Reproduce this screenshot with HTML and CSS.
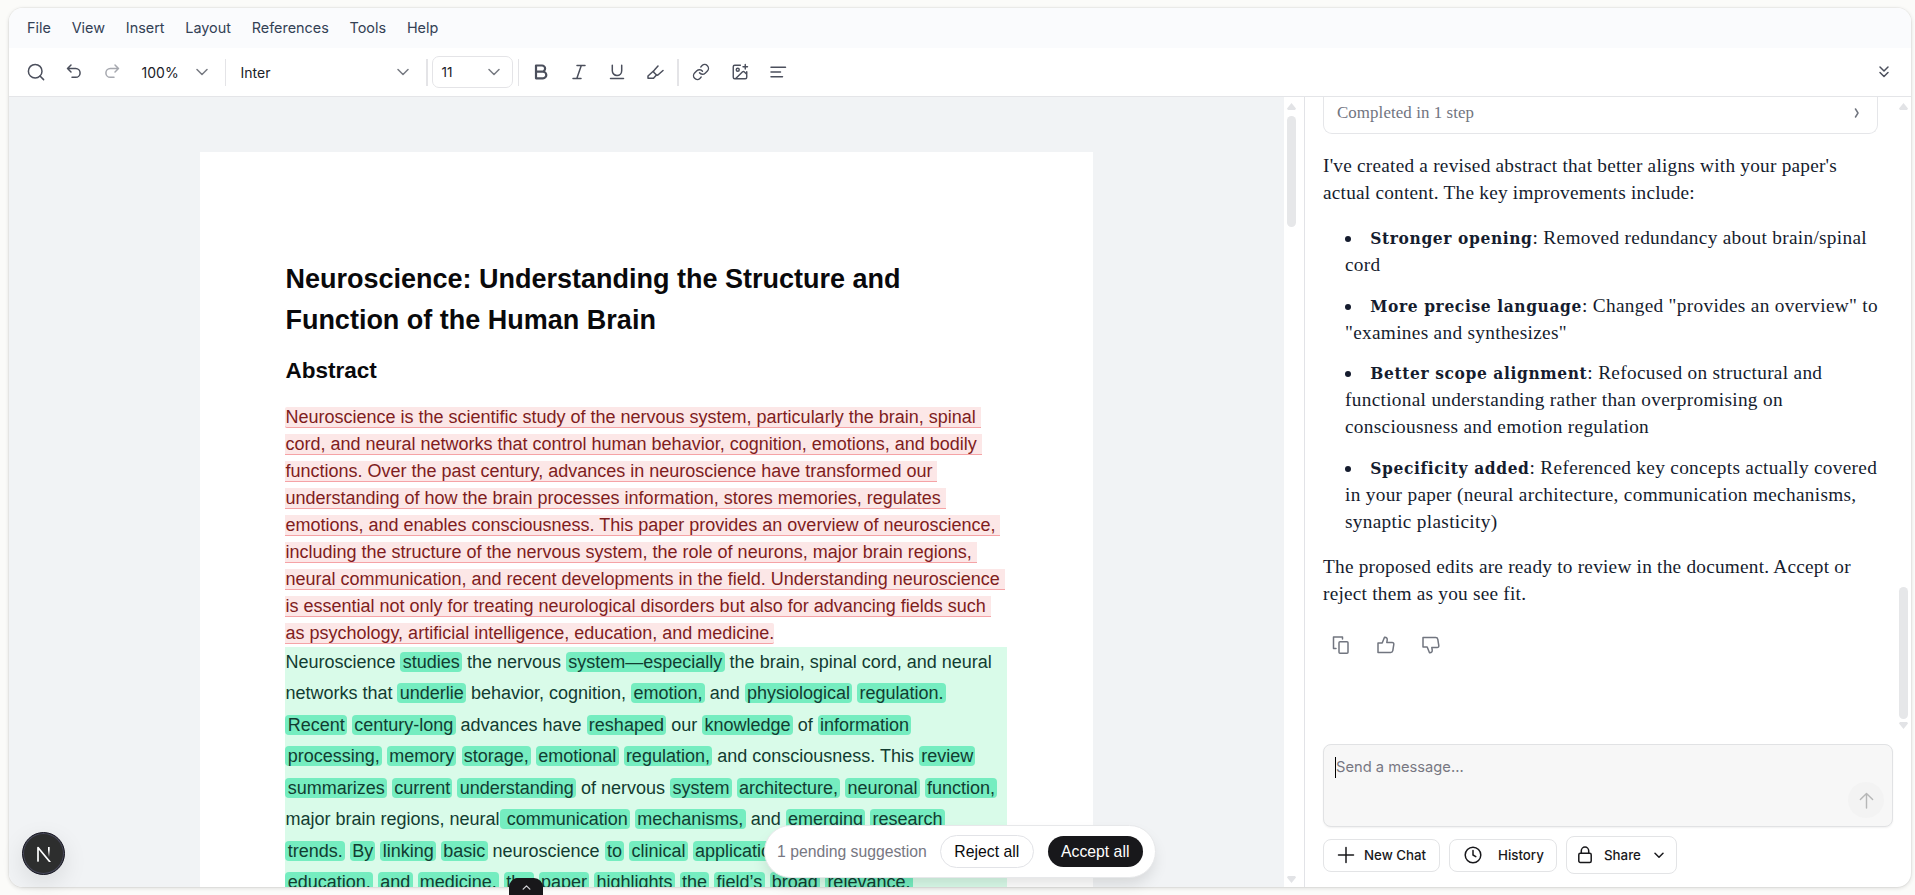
FILE: index.html
```html
<!DOCTYPE html>
<html lang="en">
<head>
<meta charset="utf-8">
<title>Document editor</title>
<link rel="stylesheet" href="styles.css">
</head>
<body>
<div class="app">
  <nav class="menu"><span>File</span><span>View</span><span>Insert</span><span>Layout</span><span>References</span><span>Tools</span><span>Help</span></nav>
  <div class="toolbar">
    <button class="tool"><svg viewBox="0 0 18 18"><circle cx="8.2" cy="8.2" r="6.8"/><path d="M13 13l3.6 3.6"/></svg></button>
    <button class="tool"><svg viewBox="0 0 18 18"><path d="M6 2 2.5 5.5 6 9M2.5 5.5h8.2a4.4 4.4 0 0 1 0 8.800H7"/></svg></button>
    <button class="tool faded"><svg viewBox="0 0 18 18"><path d="M12 2l3.500 3.500L12 9M15.500 5.500H7.300a4.400 4.400 0 0 0 0 8.800H11"/></svg></button>
    <div class="zoom"><span>100%</span><svg class="chev" viewBox="0 0 12 8"><path d="M1 1.500l5 5 5-5"/></svg></div>
    <i class="sep"></i>
    <div class="font"><span>Inter</span><svg class="chev" viewBox="0 0 12 8"><path d="M1 1.500l5 5 5-5"/></svg></div>
    <i class="sep wide"></i>
    <div class="size"><span>11</span><svg class="chev" viewBox="0 0 12 8"><path d="M1 1.500l5 5 5-5"/></svg></div>
    <i class="sep"></i>
    <button class="tool first"><svg class="bold" viewBox="0 0 18 18"><path d="M4 2.500h6a3 3 0 0 1 0 6.200H4zM4 8.700h7a3.200 3.200 0 0 1 0 6.600H4zM4 2.500v12.800"/></svg></button>
    <button class="tool"><svg viewBox="0 0 18 18"><path d="M7 2.500h8M3 15.500h8M11.300 2.500 6.800 15.500"/></svg></button>
    <button class="tool"><svg viewBox="0 0 18 18"><path d="M4.300 2.300v5.500a4.700 4.700 0 0 0 9.400 0V2.300M2.500 15.500h13"/></svg></button>
    <button class="tool"><svg viewBox="0 0 18 18"><path d="M8 7.500 2 13v2.300h5.500L10 12.500M12 3 8.200 7.200a1.800 1.800 0 0 0 0 2.500l1.800 1.800a1.800 1.800 0 0 0 2.500 0L17 7.500"/></svg></button>
    <i class="sep wide"></i>
    <button class="tool first"><svg class="link" viewBox="0 0 24 24"><path d="M10 13a5 5 0 0 0 7.540.540l3-3a5 5 0 0 0-7.070-7.070l-1.720 1.710M14 11a5 5 0 0 0-7.540-.540l-3 3a5 5 0 0 0 7.070 7.070l1.710-1.710"/></svg></button>
    <button class="tool"><svg class="link" viewBox="0 0 24 24"><path d="M16 5h6M19 2v6M21 11.500V19a2 2 0 0 1-2 2H5a2 2 0 0 1-2-2V5a2 2 0 0 1 2-2h7.500M21 15l-3.090-3.090a2 2 0 0 0-2.820 0L6 21"/><circle cx="9" cy="9" r="2"/></svg></button>
    <button class="tool"><svg viewBox="0 0 18 18"><path d="M2 4.200h14.500M2 9h9.500M2 13.700h11.500"/></svg></button>
    <button class="tool last"><svg viewBox="0 0 18 18"><path d="M5 4l4 4 4-4M5 9.500l4 4 4-4"/></svg></button>
  </div>
  <div class="work">
    <main class="canvas">
      <article class="page">
        <h1>Neuroscience: Understanding the Structure and<br>Function of the Human Brain</h1>
        <h2>Abstract</h2>
        <p class="removed"><del>Neuroscience is the scientific study of the nervous system, particularly the brain, spinal <br>cord, and neural networks that control human behavior, cognition, emotions, and bodily <br>functions. Over the past century, advances in neuroscience have transformed our <br>understanding of how the brain processes information, stores memories, regulates <br>emotions, and enables consciousness. This paper provides an overview of neuroscience, <br>including the structure of the nervous system, the role of neurons, major brain regions, <br>neural communication, and recent developments in the field. Understanding neuroscience <br>is essential not only for treating neurological disorders but also for advancing fields such <br>as psychology, artificial intelligence, education, and medicine.</del></p>
        <p class="added">Neuroscience <ins>studies</ins> the nervous <ins>system—especially</ins> the brain, spinal cord, and neural<br>networks that <ins>underlie</ins> behavior, cognition, <ins>emotion,</ins> and <ins>physiological</ins> <ins>regulation.</ins><br><ins>Recent</ins> <ins>century-long</ins> advances have <ins>reshaped</ins> our <ins>knowledge</ins> of <ins>information</ins><br><ins>processing,</ins> <ins>memory</ins> <ins>storage,</ins> <ins>emotional</ins> <ins>regulation,</ins> and consciousness. This <ins>review</ins><br><ins>summarizes</ins> <ins>current</ins> <ins>understanding</ins> of nervous <ins>system</ins> <ins>architecture,</ins> <ins>neuronal</ins> <ins>function,</ins><br>major brain regions, neural<ins> communication</ins> <ins>mechanisms,</ins> and <ins>emerging</ins> <ins>research</ins><br><ins>trends.</ins> <ins>By</ins> <ins>linking</ins> <ins>basic</ins> neuroscience <ins>to</ins> <ins>clinical</ins> <ins>applications</ins><br><ins>education,</ins> <ins>and</ins> <ins>medicine,</ins> <ins>the</ins> <ins>paper</ins> <ins>highlights</ins> <ins>the</ins> <ins>field’s</ins> <ins>broad</ins> <ins>relevance.</ins></p>
      </article>
    </main>
    <div class="scroll doc-scroll"><i class="up"></i><i class="thumb"></i><i class="down"></i></div>
    <aside class="chat">
      <div class="feed">
        <div class="messages">
          <div class="step"><span>Completed in 1 step</span><svg viewBox="0 0 6 10"><path d="M1.500 1l2.500 4-2.500 4"/></svg></div>
          <p>I've created a revised abstract that better aligns with your paper's<br>actual content. The key improvements include:</p>
          <ul>
            <li><b>Stronger opening</b>: Removed redundancy about brain/spinal<br>cord</li>
            <li><b>More precise language</b>: Changed "provides an overview" to<br>"examines and synthesizes"</li>
            <li><b>Better scope alignment</b>: Refocused on structural and<br>functional understanding rather than overpromising on<br>consciousness and emotion regulation</li>
            <li><b>Specificity added</b>: Referenced key concepts actually covered<br>in your paper (neural architecture, communication mechanisms,<br>synaptic plasticity)</li>
          </ul>
          <p>The proposed edits are ready to review in the document. Accept or<br>reject them as you see fit.</p>
          <div class="actions">
            <svg viewBox="0 0 18 18"><path d="M10.500 3V1H1.500v11.500h2.500"/><rect x="7" y="5.700" width="9" height="11.500" rx="1"/></svg>
            <svg viewBox="0 0 18 18"><path d="M1 7h4.200L7.500 1.200C9.600 1 10.500 2.300 10.200 4L9.800 6.500h5.300c1.200 0 1.900.8 1.700 1.900l-1 6.300c-.2 1.100-1 1.800-2.100 1.800H1z"/></svg>
            <svg viewBox="0 0 18 18"><path d="M1 11h4.200l2.300 5.800c2.100.2 3-1.100 2.700-2.800l-.4-2.500h5.300c1.200 0 1.900-.8 1.700-1.900l-1-6.300c-.2-1.100-1-1.800-2.100-1.800H1z"/></svg>
          </div>
        </div>
        <div class="scroll chat-scroll"><i class="up"></i><i class="thumb"></i><i class="down"></i></div>
      </div>
      <div class="composer"><div class="prompt"><i class="caret"></i>Send a message...</div><button class="send"><svg viewBox="0 0 18 18"><path d="M9 17V1.500M2.500 8 9 1.500 15.500 8"/></svg></button></div>
      <div class="footer">
        <button class="btn new"><svg viewBox="0 0 18 18"><path d="M9 1.500v15M1.500 9h15"/></svg>New Chat</button>
        <button class="btn history"><svg viewBox="0 0 18 18"><circle cx="9" cy="9" r="7.800"/><path d="M9 4.500V9l2.800 1.600"/></svg>History</button>
        <button class="btn share"><svg viewBox="0 0 18 18"><rect x="2.800" y="7.200" width="12.400" height="9.300" rx="1.500"/><path d="M5.300 7V4.800a3.700 3.700 0 0 1 7.400 0V7"/></svg>Share<svg class="mini" viewBox="0 0 10 7"><path d="M1 1.200l4 4 4-4"/></svg></button>
      </div>
    </aside>
  </div>
</div>
<div class="review"><span>1 pending suggestion</span><button class="reject">Reject all</button><button class="accept">Accept all</button></div>
<div class="drawer"><svg viewBox="0 0 10 6"><path d="M1 5l4-4 4 4"/></svg></div>
<div class="badge"><svg viewBox="0 0 16 16"><defs><linearGradient id="fade" x1="0" y1="0" x2="0" y2="1"><stop offset=".3" stop-color="#fff"/><stop offset="1" stop-color="#fff" stop-opacity="0"/></linearGradient></defs><path d="M2 15V1.500L14 16" fill="none" stroke="#fff" stroke-width="1.700"/><rect x="12" y="1" width="1.700" height="10" fill="url(#fade)"/></svg></div>
</body>
</html>
```
FILE: styles.css
```css
* { box-sizing: border-box; }
body { margin: 0; padding: 8px 4px 8px 9px; height: 895px; overflow: hidden; background: #fbfbf9; font-family: "Inter", sans-serif; color: #18181b; }
button { font: inherit; border: 0; padding: 0; background: none; color: inherit; }
svg { fill: none; stroke: currentColor; stroke-width: 1.5; stroke-linecap: round; stroke-linejoin: round; flex: none; display: block; }
.app { width: 1902px; height: 879px; display: flex; flex-direction: column; background: #fff; border-radius: 14px; overflow: hidden; box-shadow: 0 0 0 1px rgba(0,0,0,.03), 0 1px 4px rgba(0,0,0,.14); }

.menu { height: 40px; flex: none; display: flex; align-items: center; gap: 20.800px; padding: 0 0 1px 18px; background: #fafbfd; font-size: 14.400px; color: #334155; }
.toolbar { height: 49px; flex: none; display: flex; align-items: center; border-bottom: 1px solid #e4e5e8; color: #4b4f5c; font-size: 14px; padding-left: 8px; }
.tool { width: 38.200px; display: flex; justify-content: center; }
.tool svg { width: 18px; height: 18px; }
.tool svg.link { stroke-width: 1.900; }
.tool svg.bold { stroke-width: 2.200; }
.tool.faded { color: #a6a8af; }
.tool.first { margin-left: 3px; }
.tool.last { margin: 0 8px 0 auto; }
.chev { width: 12px; height: 8px; color: #777a82; }
.zoom, .font, .size { display: flex; align-items: center; justify-content: space-between; color: #202127; }
.zoom { width: 66px; margin-left: 10px; }
.sep { width: 1px; height: 27px; background: #e4e4e7; margin-left: 17px; }
.sep.wide { width: 2px; }
.font { width: 168px; margin-left: 15px; }
.size { width: 81px; height: 32px; margin-left: 4px; padding: 0 12px 0 9px; border: 1px solid #e4e4e7; border-radius: 7px; }
.size span { font-size: 13.500px; }
.size + .sep { margin-left: 5px; }
.tool + .sep { margin-left: 3px; }

.work { flex: 1; min-height: 0; display: flex; }
.canvas { width: 1275px; flex: none; background: #f1f3f5; padding: 55px 0 0 191px; overflow: hidden; }
.page { width: 893px; height: 1100px; background: #fff; padding: 107px 86px 0 85.400px; font-family: "Liberation Sans", Arial, sans-serif; font-size: 18px; white-space: nowrap; color: #09090b; }
h1 { margin: 0; font-size: 27px; line-height: 40.500px; }
h2 { margin: 14px 0 16px; font-size: 22.500px; line-height: 33.750px; }
.page p { margin: 0; }
.removed { line-height: 27px; color: #7f1d1d; }
.removed del { text-decoration: none; background: #fce7e7; border-bottom: 1px solid #f5a3a6; border-radius: 2px; white-space: pre; }
.added { line-height: 31.500px; color: #123c31; background: #d9fbe9; }
.added ins { text-decoration: none; background: #75edc0; padding: 0 2.250px; border-radius: 4px; white-space: pre; }

.scroll { width: 20px; flex: none; display: flex; flex-direction: column; align-items: flex-start; padding: 6px 0 4px 3px; }
.scroll .up, .scroll .down { width: 9px; height: 7px; background: #e2e3e6; clip-path: polygon(50% 0, 100% 80%, 90% 100%, 10% 100%, 0 80%); }
.scroll .down { clip-path: polygon(10% 0, 90% 0, 100% 20%, 50% 100%, 0 20%); margin-top: auto; }
.scroll .thumb { width: 9px; height: 111px; margin-top: 6px; border-radius: 5px; background: #e6e7e9; }

.chat { flex: 1; min-width: 0; border-left: 1px solid #e2e3e7; display: flex; flex-direction: column; padding-left: 18px; }
.feed { height: 636px; flex: none; display: flex; }
.messages { flex: 1; min-width: 0; font: 19.300px/27px "Liberation Serif", Georgia, serif; letter-spacing: .230px; color: #151c2e; white-space: nowrap; }
.messages b { font-family: "DejaVu Serif Condensed", "DejaVu Serif", serif; font-stretch: condensed; font-size: 17.200px; line-height: 1; letter-spacing: .620px; margin-left: -1px; }
.chat-scroll { width: 12px; padding-left: 0; }
.chat-scroll .thumb { height: 132px; margin-top: 477px; }
.step { width: 555px; height: 37px; display: flex; justify-content: space-between; align-items: center; padding: 0 17px 5px 13px; border: 1px solid #e5e6e9; border-top: 0; border-radius: 0 0 9px 9px; font-size: 16.900px; letter-spacing: .080px; color: #71757f; }
.step svg { width: 6px; height: 10px; }
.messages p { margin: 18px 0 0; }
.messages ul { margin: 18px 0 0; padding-left: 22px; list-style: disc inside; letter-spacing: .310px; }
.messages li + li { margin-top: 13.600px; }
.actions { display: flex; gap: 27px; padding: 29px 0 0 9px; color: #71757f; }
.actions svg { width: 18px; height: 18px; }

.composer { width: 570px; height: 83px; margin-top: 11px; flex: none; display: flex; justify-content: space-between; padding: 11px 8px 8px 11px; background: #f7f7f7; border: 1px solid #e1e2e4; border-radius: 8px; box-shadow: 0 1px 2px rgba(0,0,0,.06); font-size: 14.700px; color: #777782; }
.prompt { display: flex; line-height: 22px; }
.caret { width: 1px; height: 21px; background: #000; margin-top: 1px; }
.send { align-self: flex-end; width: 36px; height: 36px; border-radius: 50%; display: flex; align-items: center; justify-content: center; background: #f3f3f3; color: #b6b7b7; }
.send svg { width: 17px; height: 17px; }
.footer { display: flex; align-items: center; gap: 9px; margin-top: 9px; }
.btn { height: 33px; display: flex; align-items: center; border: 1px solid #e3e4e6; border-radius: 8px; font-size: 13.300px; font-weight: 500; background: #fff; }
.btn svg { width: 18px; height: 18px; }
.new { width: 117px; padding-left: 13px; gap: 9px; }
.history { width: 108px; padding-left: 14px; gap: 16px; }
.share { width: 111px; height: 38px; padding-left: 9px; gap: 10px; }
.share .mini { width: 10px; height: 7px; margin-left: 3px; }

.review { position: absolute; left: 764px; top: 825px; width: 392px; height: 53px; border-radius: 27px; background: #fff; border: 1px solid #e7e8ea; box-shadow: 0 8px 16px -3px rgba(0,0,0,.13); display: flex; align-items: center; padding-left: 12px; font: 15.750px "Liberation Sans", Arial, sans-serif; color: #777782; }
.review button { height: 33px; border-radius: 17px; }
.reject { width: 94px; margin-left: 13px; border: 1px solid #e2e3e7; color: #09090b; }
.review .accept { width: 95px; height: 31px; margin-left: 14px; background: #18181b; color: #fff; }
.drawer { position: absolute; left: 509px; top: 878px; width: 34px; height: 17px; border-radius: 9px 9px 0 0; background: #18171a; color: #d4d4d8; display: flex; justify-content: center; padding-top: 7px; }
.drawer svg { width: 9px; height: 5px; }
.badge { position: absolute; left: 22px; top: 832px; width: 43px; height: 43px; border-radius: 50%; background: #2d2e2e; border: 1px solid #171722; box-shadow: inset 0 0 0 1px #4a4b5e, 0 8px 24px rgba(0,0,0,.1); display: flex; align-items: center; justify-content: center; }
.badge svg { width: 16px; height: 16px; stroke: none; }
```
